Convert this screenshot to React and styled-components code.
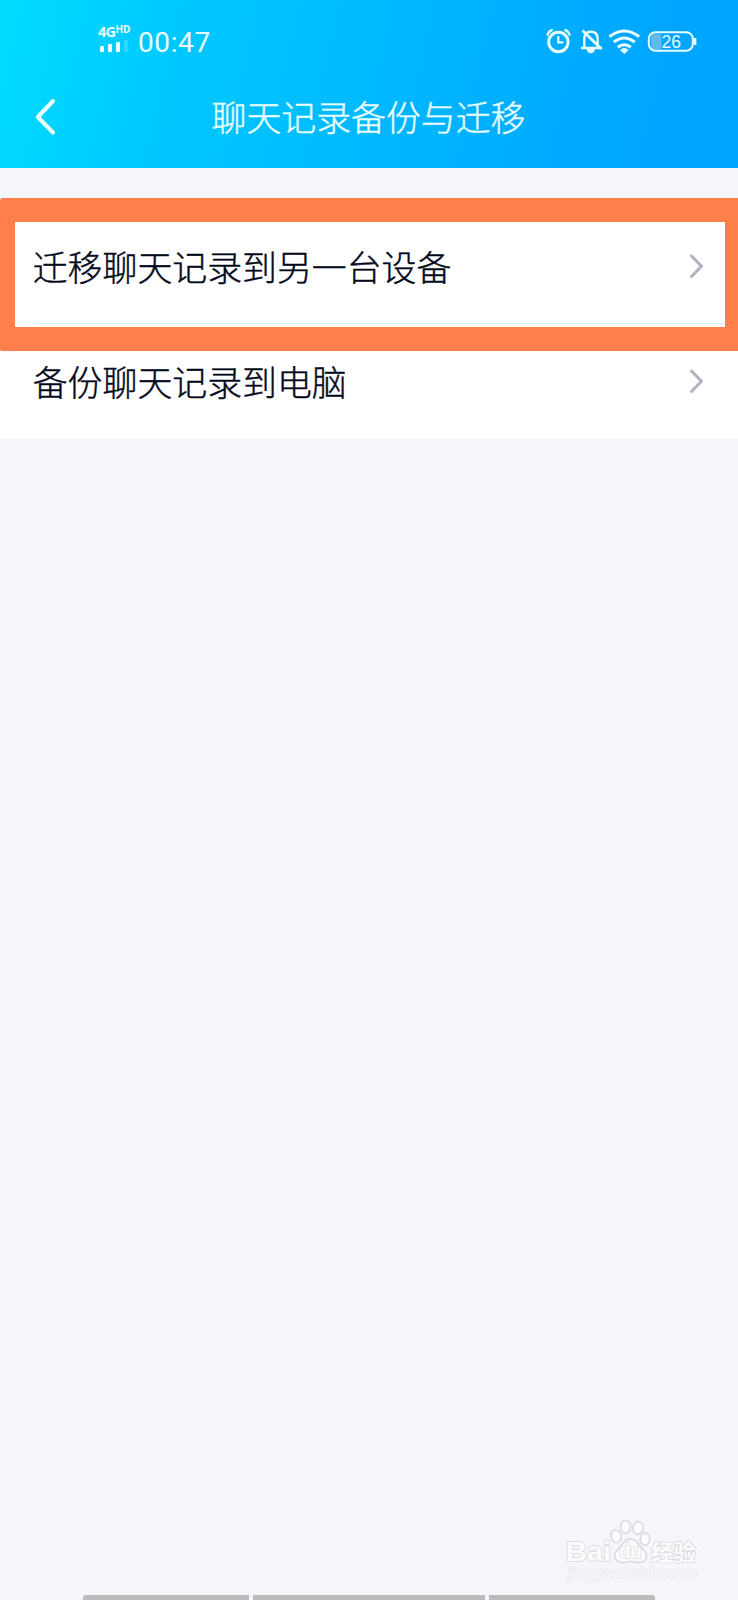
import React from 'react';
import styled, { createGlobalStyle } from 'styled-components';

const cjk = '"Noto Sans CJK SC", sans-serif';

const GlobalStyle = createGlobalStyle`
  * { box-sizing: border-box; }
  body { margin: 0; background: #f4f6fa; font-family: ${cjk}; }
`;

const Screen = styled.main`
  position: relative;
  display: flex;
  flex-direction: column;
  width: 738px;
  height: 1600px;
  overflow: hidden;
  background: #f4f6fa;
`;

const Header = styled.header`
  height: 168px;
  color: #e9fdff;
  background: linear-gradient(103deg, #00dcff 0%, #00c8ff 24%, #00b5ff 57%, #00a5ff 88%);
`;

const StatusBar = styled.div`
  display: flex;
  align-items: center;
  justify-content: space-between;
  height: 82px;
  padding: 0 40px 0 98px;
`;

const StatusGroup = styled.div`
  display: flex;
  align-items: center;
`;

const Signal = styled.div`
  display: flex;
  flex-direction: column;
  width: 32px;
  height: 28px;
  margin-top: -4px;
`;

const Network = styled.span`
  display: flex;
  align-items: flex-start;
  height: 14px;
  font: 700 14.5px/14px "Open Sans", sans-serif;
  letter-spacing: -0.7px;

  sup { font-size: 10px; line-height: 9px; letter-spacing: 0; }
`;

const Bars = styled.div`
  display: flex;
  align-items: flex-end;
  gap: 4px;
  height: 13px;
  padding-left: 2px;
`;

const Bar = styled.i`
  width: 4px;
  height: ${({ $height }) => $height}px;
  border-radius: 1px;
  background: currentColor;
  opacity: ${({ $dim }) => ($dim ? 0.2 : 1)};
`;

const Clock = styled.time`
  margin: 3px 0 0 8px;
  font: 400 28px/32px Roboto, sans-serif;
  letter-spacing: 0.6px;
`;

const StatusIcon = styled.svg`
  display: block;
  width: 154px;
  height: 30px;
  fill: none;
  stroke: currentColor;
  text { font: 400 17.5px "Liberation Sans", sans-serif; fill: currentColor; stroke: none; }
`;

const TitleBar = styled.div`
  display: grid;
  grid-template-columns: 100px 1fr 100px;
  align-items: center;
  height: 70px;
`;

const BackButton = styled.button`
  display: flex;
  padding: 0 0 0 34px;
  border: 0;
  color: inherit;
  background: none;
`;

const Title = styled.h1`
  margin: -2px 0 0 -1px;
  text-align: center;
  font: 300 34.9px/50px ${cjk};
  -webkit-text-stroke: 0.4px currentColor;
`;

const List = styled.section`
  position: relative;
  margin-top: 40px;
  padding-left: 33px;
  background: #fff;
`;

const Row = styled.button`
  display: flex;
  align-items: center;
  justify-content: space-between;
  width: 100%;
  height: ${({ $divided }) => ($divided ? 116 : 115)}px;
  padding: 0 33px ${({ $divided }) => ($divided ? 0 : 2)}px 0;
  border: 0;
  border-bottom: ${({ $divided }) => ($divided ? '1px solid #e7ecf3' : '0')};
  color: #03081a;
  background: none;
  text-align: left;
  font: 300 34.9px/50px ${cjk};
  -webkit-text-stroke: 0.4px currentColor;
`;

const RowLabel = styled.span`
  margin: 0 0 0 -0.3px;
`;

const Chevron = styled.svg`
  display: block;
  width: ${({ $width }) => $width}px;
  height: ${({ $height }) => $height}px;
  fill: none;
  stroke: currentColor;
  stroke-linecap: round;
  stroke-linejoin: round;
`;

const Arrow = styled(Chevron)`
  color: #b0b3bd;
  margin-right: 1px;
`;

const Highlight = styled.div`
  position: absolute;
  top: -10px;
  left: 0;
  width: 100%;
  height: 153px;
  border: solid #ff7f4b;
  border-width: 24px 13px 24px 15px;
  border-radius: 3px 0 0 2px;
`;

const Watermark = styled.svg`
  position: absolute;
  left: 560px;
  top: 1515px;
  width: 145px;
  height: 72px;
  fill: #fcfcfe;
  stroke: #dcdde1;
  stroke-width: 1.8;
  text { paint-order: stroke; stroke-linejoin: round; }
`;

const NavigationHints = styled.footer`
  display: flex;
  gap: 4px;
  margin: auto 83px 0;
`;

const Hint = styled.div`
  flex: ${({ $width }) => $width};
  height: 5px;
  background: #babbbd;
  &:first-child { border-top-left-radius: 3px; }
  &:last-child { border-top-right-radius: 3px; }
`;

function StatusIcons() {
  return (
    <StatusIcon viewBox="0 0 154 30" aria-label="闹钟、静音、无线网络、电量">
      <g strokeWidth="2.9" strokeLinecap="round">
        <circle cx="14.4" cy="16" r="9.7" />
        <path d="M14.3 10v6.3h5" strokeWidth="2.2" strokeLinecap="butt" />
        <path d="M3.6 8.7q1-3.3 4.2-4.5M21.3 4.2q3.2 1.2 4.2 4.5" strokeWidth="2.3" />
      </g>
      <g strokeWidth="2.4">
        <path d="M40.3 21.3V12.7q0-7 6.7-7 6.6 0 6.6 7v8.6M37 22h20" />
        <path d="M42.5 23h8.5q-1 4.3-4.2 4.3T42.5 23Z" fill="currentColor" stroke="none" />
        <path d="m38.500 4.500 19 18.500" strokeWidth="2.8" />
      </g>
      <g strokeWidth="3">
        <path d="M65.4 10.8q14.9-11.5 29.8 0M69.8 16.2q10.5-8.5 21 0M73.8 21.2q6.5-4.900 13 0" />
        <path d="M76 24q4.300-4 8.600 0L80.300 28Z" fill="currentColor" stroke="none" />
      </g>
      <rect x="107" y="8" width="10.500" height="15.500" rx="3" fill="#62b9ee" stroke="none" />
      <rect x="104.800" y="6.200" width="44" height="18.500" rx="6.500" strokeWidth="2" />
      <path d="M151 12v7" strokeWidth="2.800" />
      <text x="117.500" y="21.500">26</text>
    </StatusIcon>
  );
}

function BaiduMark() {
  return (
    <Watermark viewBox="560 1515 145 72">
      <ellipse cx="616" cy="1536.3" rx="5" ry="6.3" transform="rotate(-12 616 1536)" />
      <ellipse cx="625.6" cy="1526.8" rx="5" ry="6.5" />
      <ellipse cx="638" cy="1528" rx="5" ry="6.3" transform="rotate(12 638 1528)" />
      <ellipse cx="645" cy="1539" rx="4.8" ry="6" />
      <path d="M630 1539c-6 0-8.5 7-13 11.5-5 5.5-1.5 12 6 12 3.5 0 5-1.2 8-1.2s5 1.2 8 1.2c7 0 10-6.5 5-12-4-4-7-11.5-14-11.5Z" />
      <text x="566" y="1560.5" fontFamily="Liberation Sans" fontWeight="700" fontSize="28" textLength="45" lengthAdjust="spacingAndGlyphs">Bai</text>
      <text x="619.5" y="1558" fontFamily="Liberation Sans" fontWeight="700" fontSize="20" textLength="22" lengthAdjust="spacingAndGlyphs" strokeWidth="1.6">du</text>
      <text x="651" y="1559.5" fontFamily="Noto Sans CJK SC" fontWeight="700" fontSize="22" textLength="45" lengthAdjust="spacingAndGlyphs">经验</text>
      <text x="568" y="1578" fontFamily="Noto Sans" fontSize="15" strokeWidth="1.3" stroke="#e2e3e7" textLength="129" lengthAdjust="spacingAndGlyphs">jingyan.baidu.com</text>
    </Watermark>
  );
}

const rows = ['迁移聊天记录到另一台设备', '备份聊天记录到电脑'];

export default function App() {
  return (
    <>
      <GlobalStyle />
      <Screen>
        <Header>
          <StatusBar>
            <StatusGroup>
              <Signal>
                <Network>4G<sup>HD</sup></Network>
                <Bars>
                  <Bar $height={6} />
                  <Bar $height={8} />
                  <Bar $height={10} />
                  <Bar $height={12} $dim />
                </Bars>
              </Signal>
              <Clock>00:47</Clock>
            </StatusGroup>
            <StatusIcons />
          </StatusBar>
          <TitleBar>
            <BackButton aria-label="返回">
              <Chevron $width={23} $height={40} viewBox="0 0 23 40" strokeWidth="4">
                <path d="M19 4 3.8 20 19 35.5" />
              </Chevron>
            </BackButton>
            <Title>聊天记录备份与迁移</Title>
          </TitleBar>
        </Header>
        <List>
          {rows.map((label, index) => (
            <Row key={label} $divided={index === 0}>
              <RowLabel>{label}</RowLabel>
              <Arrow $width={16} $height={26} viewBox="0 0 16 26" strokeWidth="3">
                <path d="m3.5 3 10 10.3-10 10.2" />
              </Arrow>
            </Row>
          ))}
          <Highlight />
        </List>
        <NavigationHints>
          <Hint $width={166} />
          <Hint $width={232} />
          <Hint $width={166} />
        </NavigationHints>
        <BaiduMark />
      </Screen>
    </>
  );
}
